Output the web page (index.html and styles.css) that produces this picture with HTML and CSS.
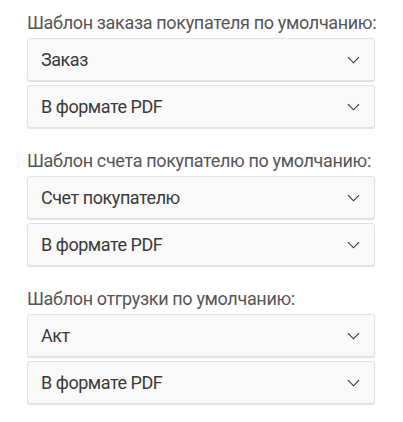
FILE: index.html
```html
<!DOCTYPE html>
<html lang="ru">

<head>
	<meta charset="UTF-8">
	<meta name="viewport" content="width=device-width, initial-scale=1.0">
	<title>Шаблоны печати</title>
	<link rel="stylesheet" href="styles.css">
</head>

<body>
	<div class="container">
		<div class="form-group">
			<label>Шаблон заказа покупателя по умолчанию:</label>
			<div class="select"><span>Заказ</span><svg viewBox="0 0 14 8"><path d="M1 1l6 6 6-6" /></svg></div>
			<div class="select"><span>В формате PDF</span><svg viewBox="0 0 14 8"><path d="M1 1l6 6 6-6" /></svg></div>
		</div>

		<div class="form-group">
			<label>Шаблон счета покупателю по умолчанию:</label>
			<div class="select"><span>Счет покупателю</span><svg viewBox="0 0 14 8"><path d="M1 1l6 6 6-6" /></svg></div>
			<div class="select"><span>В формате PDF</span><svg viewBox="0 0 14 8"><path d="M1 1l6 6 6-6" /></svg></div>
		</div>

		<div class="form-group">
			<label>Шаблон отгрузки по умолчанию:</label>
			<div class="select"><span>Акт</span><svg viewBox="0 0 14 8"><path d="M1 1l6 6 6-6" /></svg></div>
			<div class="select"><span>В формате PDF</span><svg viewBox="0 0 14 8"><path d="M1 1l6 6 6-6" /></svg></div>
		</div>
	</div>
</body>

</html>
```

FILE: styles.css
```css
* {
	box-sizing: border-box;
}

body {
	font-family: Roboto, 'Liberation Sans', sans-serif;
	background-color: #fff;
	margin: 0;
	color: #333;
}

.container {
	width: 348px;
	margin-left: 27px;
	padding-top: 11px;
}

.form-group {
	display: flex;
	flex-direction: column;
	gap: 4px;
	margin-bottom: 21px;
}

.form-group label {
	display: block;
	font-size: 18px;
	line-height: 23px;
	letter-spacing: -0.34px;
	white-space: nowrap;
	color: #555;
	margin-bottom: 0;
}

.select {
	display: flex;
	align-items: center;
	justify-content: space-between;
	height: 43px;
	padding: 0 14px 0 13px;
	font-size: 18px;
	letter-spacing: -0.45px;
	color: #3a3a3a;
	background-color: #f9f9f9;
	border: 1px solid #e2e2e2;
	border-radius: 3px;
	box-shadow: 0 1px 1px rgba(0, 0, 0, 0.12);
}

.select svg {
	width: 13px;
	height: 8px;
	fill: none;
	stroke: #333;
	stroke-width: 1.2;
}
```
